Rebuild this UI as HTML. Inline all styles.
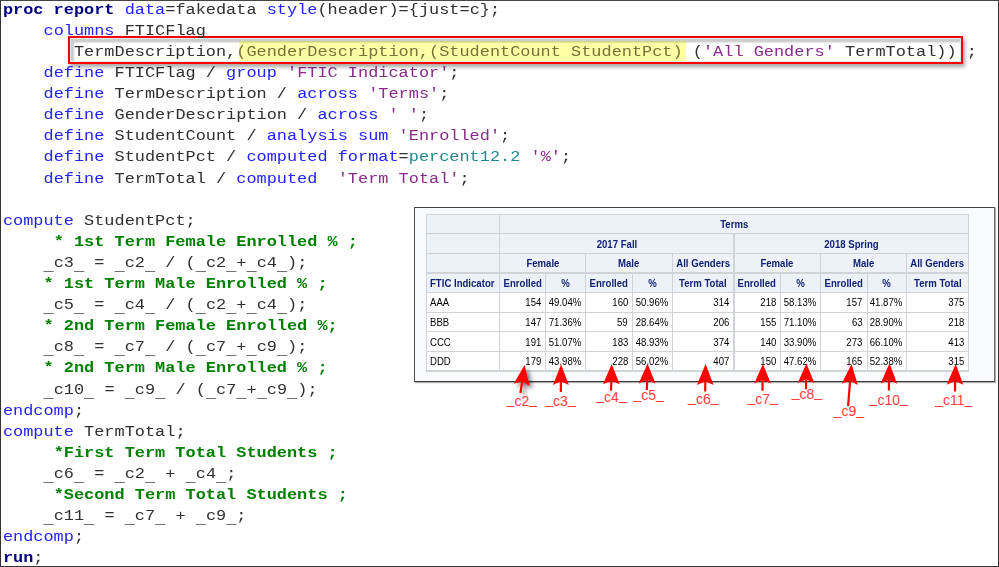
<!DOCTYPE html>
<html><head><meta charset="utf-8"><style>
html,body{margin:0;padding:0;}
body{width:999px;height:567px;position:relative;overflow:hidden;background:#fff;}
.ln{position:absolute;left:2.9px;height:21.1px;line-height:21.1px;font-family:"Liberation Mono",monospace;font-size:16.914px;white-space:pre;color:#000;transform:scaleY(0.9);transform-origin:0 15.05px;}
.b{font-weight:bold;}
.u{position:relative;top:3.2px;}
.lbl .u{top:-1.3px;}
.tb{position:absolute;font-family:"Liberation Sans",sans-serif;font-size:10.4px;white-space:nowrap;}
.tb span{display:inline-block;transform:scaleX(0.923);}
.c span{transform-origin:50% 50%;} .r span{transform-origin:100% 50%;} .l span{transform-origin:0 50%;}
.h{color:#112277;font-weight:bold;}
.d{color:#000;}
.lbl{position:absolute;font-family:"Liberation Sans",sans-serif;font-size:14px;color:#ff3c3c;white-space:nowrap;line-height:14px;}
</style></head><body>

<div style="position:absolute;left:0;top:0;width:999px;height:1px;background:#454545"></div>
<div style="position:absolute;left:0;top:0;width:1.3px;height:567px;background:#333"></div>
<div style="position:absolute;left:997.5px;top:0;width:1.5px;height:567px;background:#333"></div>
<div style="position:absolute;left:0;top:565.5px;width:999px;height:1.5px;background:#333"></div>
<div style="position:absolute;left:239px;top:41.3px;width:446.7px;height:20.4px;background:#ffffa6"></div>
<div style="position:absolute;left:68.1px;top:35.8px;width:890.9px;height:24.5px;border:2.6px solid #ff0000;box-shadow:2px 3px 4px rgba(0,0,0,0.35), inset 0 0 0 1px #d6efef, inset 4px 4.5px 1.5px rgba(0,0,0,0.2);"></div>
<div class="ln" style="top:-1.25px"><span style="color:#000080" class=b>proc report</span><span style="color:#303030"> </span><span style="color:#2323ff">data</span><span style="color:#303030">=fakedata </span><span style="color:#2323ff">style</span><span style="color:#303030">(header)={just=c};</span></div>
<div class="ln" style="top:19.85px"><span style="color:#303030">    </span><span style="color:#2323ff">columns</span><span style="color:#303030"> FTICFlag</span></div>
<div class="ln" style="top:40.95px"><span style="color:#303030">       TermDescription,</span><span style="color:#77713a">(GenderDescription,(StudentCount StudentPct)</span><span style="color:#303030"> (</span><span style="color:#8a2a8a">&#x27;All Genders&#x27;</span><span style="color:#303030"> TermTotal)) ;</span></div>
<div class="ln" style="top:62.05px"><span style="color:#303030">    </span><span style="color:#2323ff">define</span><span style="color:#303030"> FTICFlag / </span><span style="color:#2323ff">group</span><span style="color:#303030"> </span><span style="color:#8a2a8a">&#x27;FTIC Indicator&#x27;</span><span style="color:#303030">;</span></div>
<div class="ln" style="top:83.15px"><span style="color:#303030">    </span><span style="color:#2323ff">define</span><span style="color:#303030"> TermDescription / </span><span style="color:#2323ff">across</span><span style="color:#303030"> </span><span style="color:#8a2a8a">&#x27;Terms&#x27;</span><span style="color:#303030">;</span></div>
<div class="ln" style="top:104.25px"><span style="color:#303030">    </span><span style="color:#2323ff">define</span><span style="color:#303030"> GenderDescription / </span><span style="color:#2323ff">across</span><span style="color:#303030"> </span><span style="color:#8a2a8a">&#x27; &#x27;</span><span style="color:#303030">;</span></div>
<div class="ln" style="top:125.35px"><span style="color:#303030">    </span><span style="color:#2323ff">define</span><span style="color:#303030"> StudentCount / </span><span style="color:#2323ff">analysis sum</span><span style="color:#303030"> </span><span style="color:#8a2a8a">&#x27;Enrolled&#x27;</span><span style="color:#303030">;</span></div>
<div class="ln" style="top:146.45px"><span style="color:#303030">    </span><span style="color:#2323ff">define</span><span style="color:#303030"> StudentPct / </span><span style="color:#2323ff">computed format</span><span style="color:#303030">=</span><span style="color:#208a8a">percent12.2</span><span style="color:#303030"> </span><span style="color:#8a2a8a">&#x27;%&#x27;</span><span style="color:#303030">;</span></div>
<div class="ln" style="top:167.55px"><span style="color:#303030">    </span><span style="color:#2323ff">define</span><span style="color:#303030"> TermTotal / </span><span style="color:#2323ff">computed</span><span style="color:#303030">  </span><span style="color:#8a2a8a">&#x27;Term Total&#x27;</span><span style="color:#303030">;</span></div>
<div class="ln" style="top:209.75px"><span style="color:#2323ff">compute</span><span style="color:#303030"> StudentPct;</span></div>
<div class="ln" style="top:230.85px"><span style="color:#303030">     </span><span style="color:#008000" class=b>* 1st Term Female Enrolled % ;</span></div>
<div class="ln" style="top:251.95px"><span style="color:#303030">    <span class=u>_</span>c3<span class=u>_</span> = <span class=u>_</span>c2<span class=u>_</span> / (<span class=u>_</span>c2<span class=u>_</span>+<span class=u>_</span>c4<span class=u>_</span>);</span></div>
<div class="ln" style="top:273.05px"><span style="color:#303030">    </span><span style="color:#008000" class=b>* 1st Term Male Enrolled % ;</span></div>
<div class="ln" style="top:294.15px"><span style="color:#303030">    <span class=u>_</span>c5<span class=u>_</span> = <span class=u>_</span>c4<span class=u>_</span> / (<span class=u>_</span>c2<span class=u>_</span>+<span class=u>_</span>c4<span class=u>_</span>);</span></div>
<div class="ln" style="top:315.25px"><span style="color:#303030">    </span><span style="color:#008000" class=b>* 2nd Term Female Enrolled %;</span></div>
<div class="ln" style="top:336.35px"><span style="color:#303030">    <span class=u>_</span>c8<span class=u>_</span> = <span class=u>_</span>c7<span class=u>_</span> / (<span class=u>_</span>c7<span class=u>_</span>+<span class=u>_</span>c9<span class=u>_</span>);</span></div>
<div class="ln" style="top:357.45px"><span style="color:#303030">    </span><span style="color:#008000" class=b>* 2nd Term Male Enrolled % ;</span></div>
<div class="ln" style="top:378.55px"><span style="color:#303030">    <span class=u>_</span>c10<span class=u>_</span> = <span class=u>_</span>c9<span class=u>_</span> / (<span class=u>_</span>c7<span class=u>_</span>+<span class=u>_</span>c9<span class=u>_</span>);</span></div>
<div class="ln" style="top:399.65px"><span style="color:#2323ff">endcomp</span><span style="color:#303030">;</span></div>
<div class="ln" style="top:420.75px"><span style="color:#2323ff">compute</span><span style="color:#303030"> TermTotal;</span></div>
<div class="ln" style="top:441.85px"><span style="color:#303030">     </span><span style="color:#008000" class=b>*First Term Total Students ;</span></div>
<div class="ln" style="top:462.95px"><span style="color:#303030">    <span class=u>_</span>c6<span class=u>_</span> = <span class=u>_</span>c2<span class=u>_</span> + <span class=u>_</span>c4<span class=u>_</span>;</span></div>
<div class="ln" style="top:484.05px"><span style="color:#303030">     </span><span style="color:#008000" class=b>*Second Term Total Students ;</span></div>
<div class="ln" style="top:505.15px"><span style="color:#303030">    <span class=u>_</span>c11<span class=u>_</span> = <span class=u>_</span>c7<span class=u>_</span> + <span class=u>_</span>c9<span class=u>_</span>;</span></div>
<div class="ln" style="top:526.25px"><span style="color:#2323ff">endcomp</span><span style="color:#303030">;</span></div>
<div class="ln" style="top:547.35px"><span style="color:#000080" class=b>run</span><span style="color:#303030">;</span></div>
<div style="position:absolute;left:413.5px;top:207.3px;width:579px;height:172.5px;border:1px solid #444;border-left-color:#555;border-right-color:#6a6a6a;border-bottom-color:#3a3a3a;background:#f9fafd;box-shadow:1px 1px 1px rgba(0,0,0,0.3)"></div>
<div style="position:absolute;left:426.4px;top:214px;width:542.0px;height:78.19999999999999px;background:#edf2f9"></div>
<div style="position:absolute;left:426.4px;top:292.2px;width:542.0px;height:78.5px;background:#fff"></div>
<div style="position:absolute;left:425.90px;top:213.50px;width:543.00px;height:1.4px;background:#d0d4d9"></div>
<div style="position:absolute;left:425.90px;top:233.10px;width:543.00px;height:1.4px;background:#d0d4d9"></div>
<div style="position:absolute;left:425.90px;top:252.60px;width:543.00px;height:1.4px;background:#d0d4d9"></div>
<div style="position:absolute;left:425.90px;top:272.20px;width:543.00px;height:1.4px;background:#d0d4d9"></div>
<div style="position:absolute;left:425.90px;top:291.70px;width:543.00px;height:1.4px;background:#d0d4d9"></div>
<div style="position:absolute;left:425.90px;top:311.50px;width:543.00px;height:1.4px;background:#d0d4d9"></div>
<div style="position:absolute;left:425.90px;top:331.10px;width:543.00px;height:1.4px;background:#d0d4d9"></div>
<div style="position:absolute;left:425.90px;top:350.70px;width:543.00px;height:1.4px;background:#d0d4d9"></div>
<div style="position:absolute;left:425.90px;top:370.20px;width:543.00px;height:1.4px;background:#d0d4d9"></div>
<div style="position:absolute;left:425.90px;top:213.50px;width:1.4px;height:157.70px;background:#d0d4d9"></div>
<div style="position:absolute;left:967.90px;top:213.50px;width:1.4px;height:157.70px;background:#d0d4d9"></div>
<div style="position:absolute;left:498.80px;top:213.50px;width:1.4px;height:157.70px;background:#d0d4d9"></div>
<div style="position:absolute;left:733.30px;top:233.10px;width:1.4px;height:138.10px;background:#d0d4d9"></div>
<div style="position:absolute;left:585.10px;top:252.60px;width:1.4px;height:118.60px;background:#d0d4d9"></div>
<div style="position:absolute;left:672.00px;top:252.60px;width:1.4px;height:118.60px;background:#d0d4d9"></div>
<div style="position:absolute;left:820.00px;top:252.60px;width:1.4px;height:118.60px;background:#d0d4d9"></div>
<div style="position:absolute;left:906.10px;top:252.60px;width:1.4px;height:118.60px;background:#d0d4d9"></div>
<div style="position:absolute;left:544.90px;top:272.20px;width:1.4px;height:99.00px;background:#d0d4d9"></div>
<div style="position:absolute;left:632.00px;top:272.20px;width:1.4px;height:99.00px;background:#d0d4d9"></div>
<div style="position:absolute;left:780.00px;top:272.20px;width:1.4px;height:99.00px;background:#d0d4d9"></div>
<div style="position:absolute;left:866.60px;top:272.20px;width:1.4px;height:99.00px;background:#d0d4d9"></div>
<div class="tb c h" style="left:499.3px;width:469.09999999999997px;top:215.0px;height:19.599999999999994px;line-height:19.599999999999994px;text-align:center"><span>Terms</span></div>
<div class="tb c h" style="left:499.3px;width:234.49999999999994px;top:234.6px;height:19.5px;line-height:19.5px;text-align:center"><span>2017 Fall</span></div>
<div class="tb c h" style="left:733.8px;width:234.60000000000002px;top:234.6px;height:19.5px;line-height:19.5px;text-align:center"><span>2018 Spring</span></div>
<div class="tb c h" style="left:499.3px;width:86.30000000000001px;top:254.1px;height:19.599999999999994px;line-height:19.599999999999994px;text-align:center"><span>Female</span></div>
<div class="tb c h" style="left:585.6px;width:86.89999999999998px;top:254.1px;height:19.599999999999994px;line-height:19.599999999999994px;text-align:center"><span>Male</span></div>
<div class="tb c h" style="left:672.5px;width:61.299999999999955px;top:254.1px;height:19.599999999999994px;line-height:19.599999999999994px;text-align:center"><span>All Genders</span></div>
<div class="tb c h" style="left:499.3px;width:46.099999999999966px;top:273.7px;height:19.5px;line-height:19.5px;text-align:center"><span>Enrolled</span></div>
<div class="tb c h" style="left:545.4px;width:40.200000000000045px;top:273.7px;height:19.5px;line-height:19.5px;text-align:center"><span>%</span></div>
<div class="tb c h" style="left:585.6px;width:46.89999999999998px;top:273.7px;height:19.5px;line-height:19.5px;text-align:center"><span>Enrolled</span></div>
<div class="tb c h" style="left:632.5px;width:40.0px;top:273.7px;height:19.5px;line-height:19.5px;text-align:center"><span>%</span></div>
<div class="tb c h" style="left:672.5px;width:61.299999999999955px;top:273.7px;height:19.5px;line-height:19.5px;text-align:center"><span>Term Total</span></div>
<div class="tb c h" style="left:733.8px;width:86.70000000000005px;top:254.1px;height:19.599999999999994px;line-height:19.599999999999994px;text-align:center"><span>Female</span></div>
<div class="tb c h" style="left:820.5px;width:86.10000000000002px;top:254.1px;height:19.599999999999994px;line-height:19.599999999999994px;text-align:center"><span>Male</span></div>
<div class="tb c h" style="left:906.6px;width:61.799999999999955px;top:254.1px;height:19.599999999999994px;line-height:19.599999999999994px;text-align:center"><span>All Genders</span></div>
<div class="tb c h" style="left:733.8px;width:46.700000000000045px;top:273.7px;height:19.5px;line-height:19.5px;text-align:center"><span>Enrolled</span></div>
<div class="tb c h" style="left:780.5px;width:40.0px;top:273.7px;height:19.5px;line-height:19.5px;text-align:center"><span>%</span></div>
<div class="tb c h" style="left:820.5px;width:46.60000000000002px;top:273.7px;height:19.5px;line-height:19.5px;text-align:center"><span>Enrolled</span></div>
<div class="tb c h" style="left:867.1px;width:39.5px;top:273.7px;height:19.5px;line-height:19.5px;text-align:center"><span>%</span></div>
<div class="tb c h" style="left:906.6px;width:61.799999999999955px;top:273.7px;height:19.5px;line-height:19.5px;text-align:center"><span>Term Total</span></div>
<div class="tb l h" style="left:430.4px;width:72.90000000000003px;top:273.7px;height:19.5px;line-height:19.5px;text-align:left"><span>FTIC Indicator</span></div>
<div class="tb l d" style="left:430.4px;width:72.90000000000003px;top:293.2px;height:19.80000000000001px;line-height:19.80000000000001px;text-align:left"><span>AAA</span></div>
<div class="tb r d" style="left:499.3px;width:41.599999999999966px;top:293.2px;height:19.80000000000001px;line-height:19.80000000000001px;text-align:right"><span>154</span></div>
<div class="tb r d" style="left:545.4px;width:35.700000000000045px;top:293.2px;height:19.80000000000001px;line-height:19.80000000000001px;text-align:right"><span>49.04%</span></div>
<div class="tb r d" style="left:585.6px;width:42.39999999999998px;top:293.2px;height:19.80000000000001px;line-height:19.80000000000001px;text-align:right"><span>160</span></div>
<div class="tb r d" style="left:632.5px;width:35.5px;top:293.2px;height:19.80000000000001px;line-height:19.80000000000001px;text-align:right"><span>50.96%</span></div>
<div class="tb r d" style="left:672.5px;width:56.799999999999955px;top:293.2px;height:19.80000000000001px;line-height:19.80000000000001px;text-align:right"><span>314</span></div>
<div class="tb r d" style="left:733.8px;width:42.200000000000045px;top:293.2px;height:19.80000000000001px;line-height:19.80000000000001px;text-align:right"><span>218</span></div>
<div class="tb r d" style="left:780.5px;width:35.5px;top:293.2px;height:19.80000000000001px;line-height:19.80000000000001px;text-align:right"><span>58.13%</span></div>
<div class="tb r d" style="left:820.5px;width:42.10000000000002px;top:293.2px;height:19.80000000000001px;line-height:19.80000000000001px;text-align:right"><span>157</span></div>
<div class="tb r d" style="left:867.1px;width:35.0px;top:293.2px;height:19.80000000000001px;line-height:19.80000000000001px;text-align:right"><span>41.87%</span></div>
<div class="tb r d" style="left:906.6px;width:57.299999999999955px;top:293.2px;height:19.80000000000001px;line-height:19.80000000000001px;text-align:right"><span>375</span></div>
<div class="tb l d" style="left:430.4px;width:72.90000000000003px;top:313.0px;height:19.600000000000023px;line-height:19.600000000000023px;text-align:left"><span>BBB</span></div>
<div class="tb r d" style="left:499.3px;width:41.599999999999966px;top:313.0px;height:19.600000000000023px;line-height:19.600000000000023px;text-align:right"><span>147</span></div>
<div class="tb r d" style="left:545.4px;width:35.700000000000045px;top:313.0px;height:19.600000000000023px;line-height:19.600000000000023px;text-align:right"><span>71.36%</span></div>
<div class="tb r d" style="left:585.6px;width:42.39999999999998px;top:313.0px;height:19.600000000000023px;line-height:19.600000000000023px;text-align:right"><span>59</span></div>
<div class="tb r d" style="left:632.5px;width:35.5px;top:313.0px;height:19.600000000000023px;line-height:19.600000000000023px;text-align:right"><span>28.64%</span></div>
<div class="tb r d" style="left:672.5px;width:56.799999999999955px;top:313.0px;height:19.600000000000023px;line-height:19.600000000000023px;text-align:right"><span>206</span></div>
<div class="tb r d" style="left:733.8px;width:42.200000000000045px;top:313.0px;height:19.600000000000023px;line-height:19.600000000000023px;text-align:right"><span>155</span></div>
<div class="tb r d" style="left:780.5px;width:35.5px;top:313.0px;height:19.600000000000023px;line-height:19.600000000000023px;text-align:right"><span>71.10%</span></div>
<div class="tb r d" style="left:820.5px;width:42.10000000000002px;top:313.0px;height:19.600000000000023px;line-height:19.600000000000023px;text-align:right"><span>63</span></div>
<div class="tb r d" style="left:867.1px;width:35.0px;top:313.0px;height:19.600000000000023px;line-height:19.600000000000023px;text-align:right"><span>28.90%</span></div>
<div class="tb r d" style="left:906.6px;width:57.299999999999955px;top:313.0px;height:19.600000000000023px;line-height:19.600000000000023px;text-align:right"><span>218</span></div>
<div class="tb l d" style="left:430.4px;width:72.90000000000003px;top:332.6px;height:19.599999999999966px;line-height:19.599999999999966px;text-align:left"><span>CCC</span></div>
<div class="tb r d" style="left:499.3px;width:41.599999999999966px;top:332.6px;height:19.599999999999966px;line-height:19.599999999999966px;text-align:right"><span>191</span></div>
<div class="tb r d" style="left:545.4px;width:35.700000000000045px;top:332.6px;height:19.599999999999966px;line-height:19.599999999999966px;text-align:right"><span>51.07%</span></div>
<div class="tb r d" style="left:585.6px;width:42.39999999999998px;top:332.6px;height:19.599999999999966px;line-height:19.599999999999966px;text-align:right"><span>183</span></div>
<div class="tb r d" style="left:632.5px;width:35.5px;top:332.6px;height:19.599999999999966px;line-height:19.599999999999966px;text-align:right"><span>48.93%</span></div>
<div class="tb r d" style="left:672.5px;width:56.799999999999955px;top:332.6px;height:19.599999999999966px;line-height:19.599999999999966px;text-align:right"><span>374</span></div>
<div class="tb r d" style="left:733.8px;width:42.200000000000045px;top:332.6px;height:19.599999999999966px;line-height:19.599999999999966px;text-align:right"><span>140</span></div>
<div class="tb r d" style="left:780.5px;width:35.5px;top:332.6px;height:19.599999999999966px;line-height:19.599999999999966px;text-align:right"><span>33.90%</span></div>
<div class="tb r d" style="left:820.5px;width:42.10000000000002px;top:332.6px;height:19.599999999999966px;line-height:19.599999999999966px;text-align:right"><span>273</span></div>
<div class="tb r d" style="left:867.1px;width:35.0px;top:332.6px;height:19.599999999999966px;line-height:19.599999999999966px;text-align:right"><span>66.10%</span></div>
<div class="tb r d" style="left:906.6px;width:57.299999999999955px;top:332.6px;height:19.599999999999966px;line-height:19.599999999999966px;text-align:right"><span>413</span></div>
<div class="tb l d" style="left:430.4px;width:72.90000000000003px;top:352.2px;height:19.5px;line-height:19.5px;text-align:left"><span>DDD</span></div>
<div class="tb r d" style="left:499.3px;width:41.599999999999966px;top:352.2px;height:19.5px;line-height:19.5px;text-align:right"><span>179</span></div>
<div class="tb r d" style="left:545.4px;width:35.700000000000045px;top:352.2px;height:19.5px;line-height:19.5px;text-align:right"><span>43.98%</span></div>
<div class="tb r d" style="left:585.6px;width:42.39999999999998px;top:352.2px;height:19.5px;line-height:19.5px;text-align:right"><span>228</span></div>
<div class="tb r d" style="left:632.5px;width:35.5px;top:352.2px;height:19.5px;line-height:19.5px;text-align:right"><span>56.02%</span></div>
<div class="tb r d" style="left:672.5px;width:56.799999999999955px;top:352.2px;height:19.5px;line-height:19.5px;text-align:right"><span>407</span></div>
<div class="tb r d" style="left:733.8px;width:42.200000000000045px;top:352.2px;height:19.5px;line-height:19.5px;text-align:right"><span>150</span></div>
<div class="tb r d" style="left:780.5px;width:35.5px;top:352.2px;height:19.5px;line-height:19.5px;text-align:right"><span>47.62%</span></div>
<div class="tb r d" style="left:820.5px;width:42.10000000000002px;top:352.2px;height:19.5px;line-height:19.5px;text-align:right"><span>165</span></div>
<div class="tb r d" style="left:867.1px;width:35.0px;top:352.2px;height:19.5px;line-height:19.5px;text-align:right"><span>52.38%</span></div>
<div class="tb r d" style="left:906.6px;width:57.299999999999955px;top:352.2px;height:19.5px;line-height:19.5px;text-align:right"><span>315</span></div>
<svg style="position:absolute;left:0;top:0" width="999" height="567" viewBox="0 0 999 567"><defs><filter id="sh" x="-50%" y="-50%" width="200%" height="200%"><feGaussianBlur in="SourceAlpha" stdDeviation="2"/><feOffset dx="3" dy="3" result="o"/><feComponentTransfer><feFuncA type="linear" slope="0.55"/></feComponentTransfer><feMerge><feMergeNode/><feMergeNode in="SourceGraphic"/></feMerge></filter></defs><g filter="url(#sh)"><polygon points="524.6,365 529.6999999999999,385.90000000000003 522.2,381.3 513.7,383.8" fill="#ff0000"/><line x1="522.2" y1="381.3" x2="520.4" y2="393" stroke="#ff0000" stroke-width="2.2"/></g><g><polygon points="561.1,364.5 568.8,384.90000000000003 560.9,381.2 552.9000000000001,384.90000000000003" fill="#ff0000"/><line x1="560.9" y1="381.2" x2="560.8" y2="392" stroke="#ff0000" stroke-width="2.2"/></g><g><polygon points="611.7,364.1 619.6999999999999,384.3 611.4,380.7 603.0,384.3" fill="#ff0000"/><line x1="611.4" y1="380.7" x2="611" y2="390.7" stroke="#ff0000" stroke-width="2.2"/></g><g><polygon points="647.5,363.4 655.5,383.6 647.2,380.0 638.7,383.6" fill="#ff0000"/><line x1="647.2" y1="380.0" x2="646.8" y2="390" stroke="#ff0000" stroke-width="2.2"/></g><g><polygon points="705.6,364.1 713.5999999999999,385.0 705.3,381.2 696.9000000000001,385.0" fill="#ff0000"/><line x1="705.3" y1="381.2" x2="705.2" y2="391.4" stroke="#ff0000" stroke-width="2.2"/></g><g><polygon points="762.9,364.1 770.9,383.6 762.6,380.1 754.2,383.6" fill="#ff0000"/><line x1="762.6" y1="380.1" x2="762.5" y2="390.7" stroke="#ff0000" stroke-width="2.2"/></g><g><polygon points="806.4,363.4 814.4,382.90000000000003 806.1,379.4 797.7,382.90000000000003" fill="#ff0000"/><line x1="806.1" y1="379.4" x2="806" y2="389.3" stroke="#ff0000" stroke-width="2.2"/></g><g><polygon points="851.6,364.1 857.8,385.0 850.1,380.7 841.8000000000001,383.6" fill="#ff0000"/><line x1="850.1" y1="380.7" x2="848.1" y2="406.1" stroke="#ff0000" stroke-width="2.2"/></g><g><polygon points="889.5,363.3 897.1999999999999,383.8 889.0,379.9 880.6,383.40000000000003" fill="#ff0000"/><line x1="889.0" y1="379.9" x2="888.9" y2="390.5" stroke="#ff0000" stroke-width="2.2"/></g><g><polygon points="955.7,364 963.3,384.8 955.1,381.1 946.7,384.8" fill="#ff0000"/><line x1="955.1" y1="381.1" x2="955" y2="391.5" stroke="#ff0000" stroke-width="2.2"/></g></svg>
<div class="lbl" style="left:506.6px;top:393.67px"><span class=u>_</span>c2<span class=u>_</span></div>
<div class="lbl" style="left:545.3px;top:393.67px"><span class=u>_</span>c3<span class=u>_</span></div>
<div class="lbl" style="left:596.3px;top:389.57px"><span class=u>_</span>c4<span class=u>_</span></div>
<div class="lbl" style="left:633.4px;top:388.17px"><span class=u>_</span>c5<span class=u>_</span></div>
<div class="lbl" style="left:688.1px;top:391.67px"><span class=u>_</span>c6<span class=u>_</span></div>
<div class="lbl" style="left:747.5px;top:391.67px"><span class=u>_</span>c7<span class=u>_</span></div>
<div class="lbl" style="left:791.7px;top:386.77px"><span class=u>_</span>c8<span class=u>_</span></div>
<div class="lbl" style="left:833.7px;top:404.37px"><span class=u>_</span>c9<span class=u>_</span></div>
<div class="lbl" style="left:869.7px;top:392.77px"><span class=u>_</span>c10<span class=u>_</span></div>
<div class="lbl" style="left:935.1px;top:393.47px"><span class=u>_</span>c11<span class=u>_</span></div>
</body></html>
